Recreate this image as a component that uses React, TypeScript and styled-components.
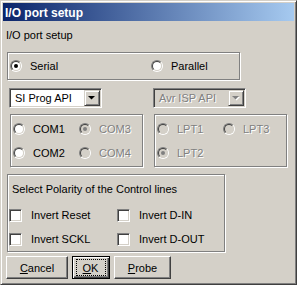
import React from "react";
import styled, { createGlobalStyle, css } from "styled-components";

const FACE = "#d4d0c8";

const Global = createGlobalStyle`
  html, body { margin: 0; padding: 0; background: ${FACE}; }
  body { font-family: "Liberation Sans", Arial, sans-serif; font-size: 11px; color: #000; }
`;

const etched = css`
  box-sizing: border-box;
  border: 1px solid #808080;
  box-shadow: inset 1px 1px 0 #fff, 1px 1px 0 #fff;
`;

const disabledText = css`
  color: #808080;
  text-shadow: 1px 1px 0 #fff;
`;

const Window = styled.div`
  box-sizing: border-box;
  width: 297px;
  height: 285px;
  background: ${FACE};
  border: 1px solid;
  border-color: ${FACE} #404040 #404040 ${FACE};
  box-shadow: inset 1px 1px 0 #fff, inset -1px -1px 0 #808080;
  padding: 2px;
  display: flex;
  flex-direction: column;
`;

const TitleBar = styled.div`
  box-sizing: border-box;
  flex: none;
  height: 18px;
  padding: 1px 0 0 2px;
  background: linear-gradient(to right, #0a246a, #a6caf0);
  color: #fff;
  font-weight: bold;
  font-size: 12px;
  line-height: 18px;
  white-space: nowrap;
  overflow: hidden;
`;

const Body = styled.div`
  display: flex;
  flex-direction: column;
  align-items: flex-start;
`;

const Caption = styled.div`
  margin: 8px 0 0 3px;
  line-height: 13px;
`;

const PortGroup = styled.div`
  ${etched};
  margin: 10px 0 0 4px;
  width: 233px;
  height: 28px;
  padding-left: 2px;
  display: grid;
  grid-template-columns: 141px auto;
  align-items: center;
`;

const ApiSection = styled.div`
  margin: 8px 0 0 6px;
  display: grid;
  grid-template-columns: 144px 144px;
`;

const ApiColumn = styled.div`
  display: flex;
  flex-direction: column;
  align-items: flex-start;
`;

const Combo = styled.div<{ $disabled?: boolean }>`
  box-sizing: border-box;
  width: 93px;
  height: 20px;
  padding: 1px;
  border: 1px solid;
  border-color: #808080 #fff #fff #808080;
  box-shadow: inset 1px 1px 0 #404040, inset -1px -1px 0 ${FACE};
  background: ${(p) => (p.$disabled ? FACE : "#fff")};
  display: flex;
  align-items: stretch;
`;

const ComboText = styled.span<{ $disabled?: boolean }>`
  flex: 1;
  padding-left: 4px;
  line-height: 16px;
  white-space: nowrap;
  ${(p) => (p.$disabled ? disabledText : "")};
`;

const ComboButton = styled.span`
  box-sizing: border-box;
  flex: none;
  width: 16px;
  border: 1px solid;
  border-color: ${FACE} #404040 #404040 ${FACE};
  box-shadow: inset 1px 1px 0 #fff, inset -1px -1px 0 #808080;
  background: ${FACE};
  display: flex;
  align-items: center;
  justify-content: center;
`;

const PortBox = styled.div`
  ${etched};
  margin: 6px 0 0 1px;
  width: 133px;
  height: 53px;
  padding: 2px 0 0 2px;
  display: grid;
  grid-template-columns: 66px 66px;
  grid-template-rows: 24px 24px;
  grid-auto-flow: column;
  align-items: center;
`;

const OptionLabel = styled.label<{ $disabled?: boolean; $gap: number }>`
  display: flex;
  align-items: center;
  gap: ${(p) => p.$gap}px;
  line-height: 13px;
  white-space: nowrap;
  ${(p) => (p.$disabled ? disabledText : "")};
`;

const RadioOuter = styled.span`
  box-sizing: border-box;
  flex: none;
  width: 12px;
  height: 12px;
  border-radius: 50%;
  border: 1px solid;
  border-color: #808080 #fff #fff #808080;
  display: flex;
  align-items: center;
  justify-content: center;
`;

const RadioInner = styled.span<{ $disabled?: boolean }>`
  box-sizing: border-box;
  width: 10px;
  height: 10px;
  border-radius: 50%;
  border: 1px solid;
  border-color: #404040 ${FACE} ${FACE} #404040;
  background: ${(p) => (p.$disabled ? FACE : "#fff")};
  display: flex;
  align-items: center;
  justify-content: center;
`;

const RadioDot = styled.span<{ $disabled?: boolean }>`
  width: 4px;
  height: 4px;
  border-radius: 50%;
  background: ${(p) => (p.$disabled ? "#808080" : "#000")};
`;

const CheckBox = styled.span`
  box-sizing: border-box;
  flex: none;
  width: 13px;
  height: 13px;
  background: #fff;
  border: 1px solid;
  border-color: #808080 #fff #fff #808080;
  box-shadow: inset 1px 1px 0 #404040, inset -1px -1px 0 ${FACE};
`;

const PolarityGroup = styled.div`
  ${etched};
  margin: 7px 0 0 4px;
  width: 218px;
  height: 78px;
  padding: 8px 0 0 1px;
`;

const PolarityTitle = styled.div`
  margin-left: 3px;
  line-height: 13px;
  white-space: nowrap;
`;

const CheckGrid = styled.div`
  margin-top: 7px;
  display: grid;
  grid-template-columns: 108px auto;
  grid-template-rows: 24px 24px;
  align-items: center;
`;

const ButtonRow = styled.div`
  margin: 4px 0 0 3px;
  display: flex;
  gap: 4px;
`;

const Button = styled.button<{ $w: number; $default?: boolean }>`
  box-sizing: border-box;
  width: ${(p) => p.$w}px;
  height: 23px;
  margin: 0;
  padding: 0;
  background: ${FACE};
  font: 11px "Liberation Sans", Arial, sans-serif;
  color: #000;
  display: flex;
  align-items: center;
  justify-content: center;
  border: 1px solid;
  ${(p) =>
    p.$default
      ? css`
          border-color: #000;
          box-shadow: inset 1px 1px 0 #fff, inset -1px -1px 0 #404040,
            inset -2px -2px 0 #808080;
        `
      : css`
          border-color: #fff #404040 #404040 #fff;
          box-shadow: inset -1px -1px 0 #808080, inset 1px 1px 0 ${FACE};
        `}
`;

const FocusRing = styled.span`
  box-sizing: border-box;
  width: 30px;
  height: 17px;
  margin: 0 1px 0 0;
  border: 1px dotted #000;
  display: flex;
  align-items: center;
  justify-content: center;
`;

function Arrow({ disabled }: { disabled?: boolean }) {
  return (
    <svg width="8" height="5" viewBox="0 0 8 5">
      {disabled && <polygon points="1,1 8,1 4.5,4.5" fill="#fff" />}
      <polygon points="0,0 7,0 3.5,3.5" fill={disabled ? "#808080" : "#000"} />
    </svg>
  );
}

function Radio({
  label,
  checked,
  disabled,
}: {
  label: string;
  checked?: boolean;
  disabled?: boolean;
}) {
  return (
    <OptionLabel $disabled={disabled} $gap={8}>
      <RadioOuter>
        <RadioInner $disabled={disabled}>
          {checked && <RadioDot $disabled={disabled} />}
        </RadioInner>
      </RadioOuter>
      {label}
    </OptionLabel>
  );
}

function Check({ label }: { label: string }) {
  return (
    <OptionLabel $gap={9}>
      <CheckBox />
      {label}
    </OptionLabel>
  );
}

function ComboBox({ value, disabled }: { value: string; disabled?: boolean }) {
  return (
    <Combo $disabled={disabled}>
      <ComboText $disabled={disabled}>{value}</ComboText>
      <ComboButton>
        <Arrow disabled={disabled} />
      </ComboButton>
    </Combo>
  );
}

export default function App() {
  return (
    <>
      <Global />
      <Window>
        <TitleBar>I/O port setup</TitleBar>
        <Body>
          <Caption>I/O port setup</Caption>
          <PortGroup>
            <Radio label="Serial" checked />
            <Radio label="Parallel" />
          </PortGroup>
          <ApiSection>
            <ApiColumn>
              <ComboBox value="SI Prog API" />
              <PortBox>
                <Radio label="COM1" />
                <Radio label="COM2" />
                <Radio label="COM3" checked disabled />
                <Radio label="COM4" disabled />
              </PortBox>
            </ApiColumn>
            <ApiColumn>
              <ComboBox value="Avr ISP API" disabled />
              <PortBox>
                <Radio label="LPT1" disabled />
                <Radio label="LPT2" checked disabled />
                <Radio label="LPT3" disabled />
              </PortBox>
            </ApiColumn>
          </ApiSection>
          <PolarityGroup>
            <PolarityTitle>Select Polarity of the Control lines</PolarityTitle>
            <CheckGrid>
              <Check label="Invert Reset" />
              <Check label="Invert D-IN" />
              <Check label="Invert SCKL" />
              <Check label="Invert D-OUT" />
            </CheckGrid>
          </PolarityGroup>
          <ButtonRow>
            <Button $w={62}>
              <span>
                <u>C</u>ancel
              </span>
            </Button>
            <Button $w={38} $default>
              <FocusRing>
                <span>
                  <u>O</u>K
                </span>
              </FocusRing>
            </Button>
            <Button $w={57}>
              <span>
                <u>P</u>robe
              </span>
            </Button>
          </ButtonRow>
        </Body>
      </Window>
    </>
  );
}
